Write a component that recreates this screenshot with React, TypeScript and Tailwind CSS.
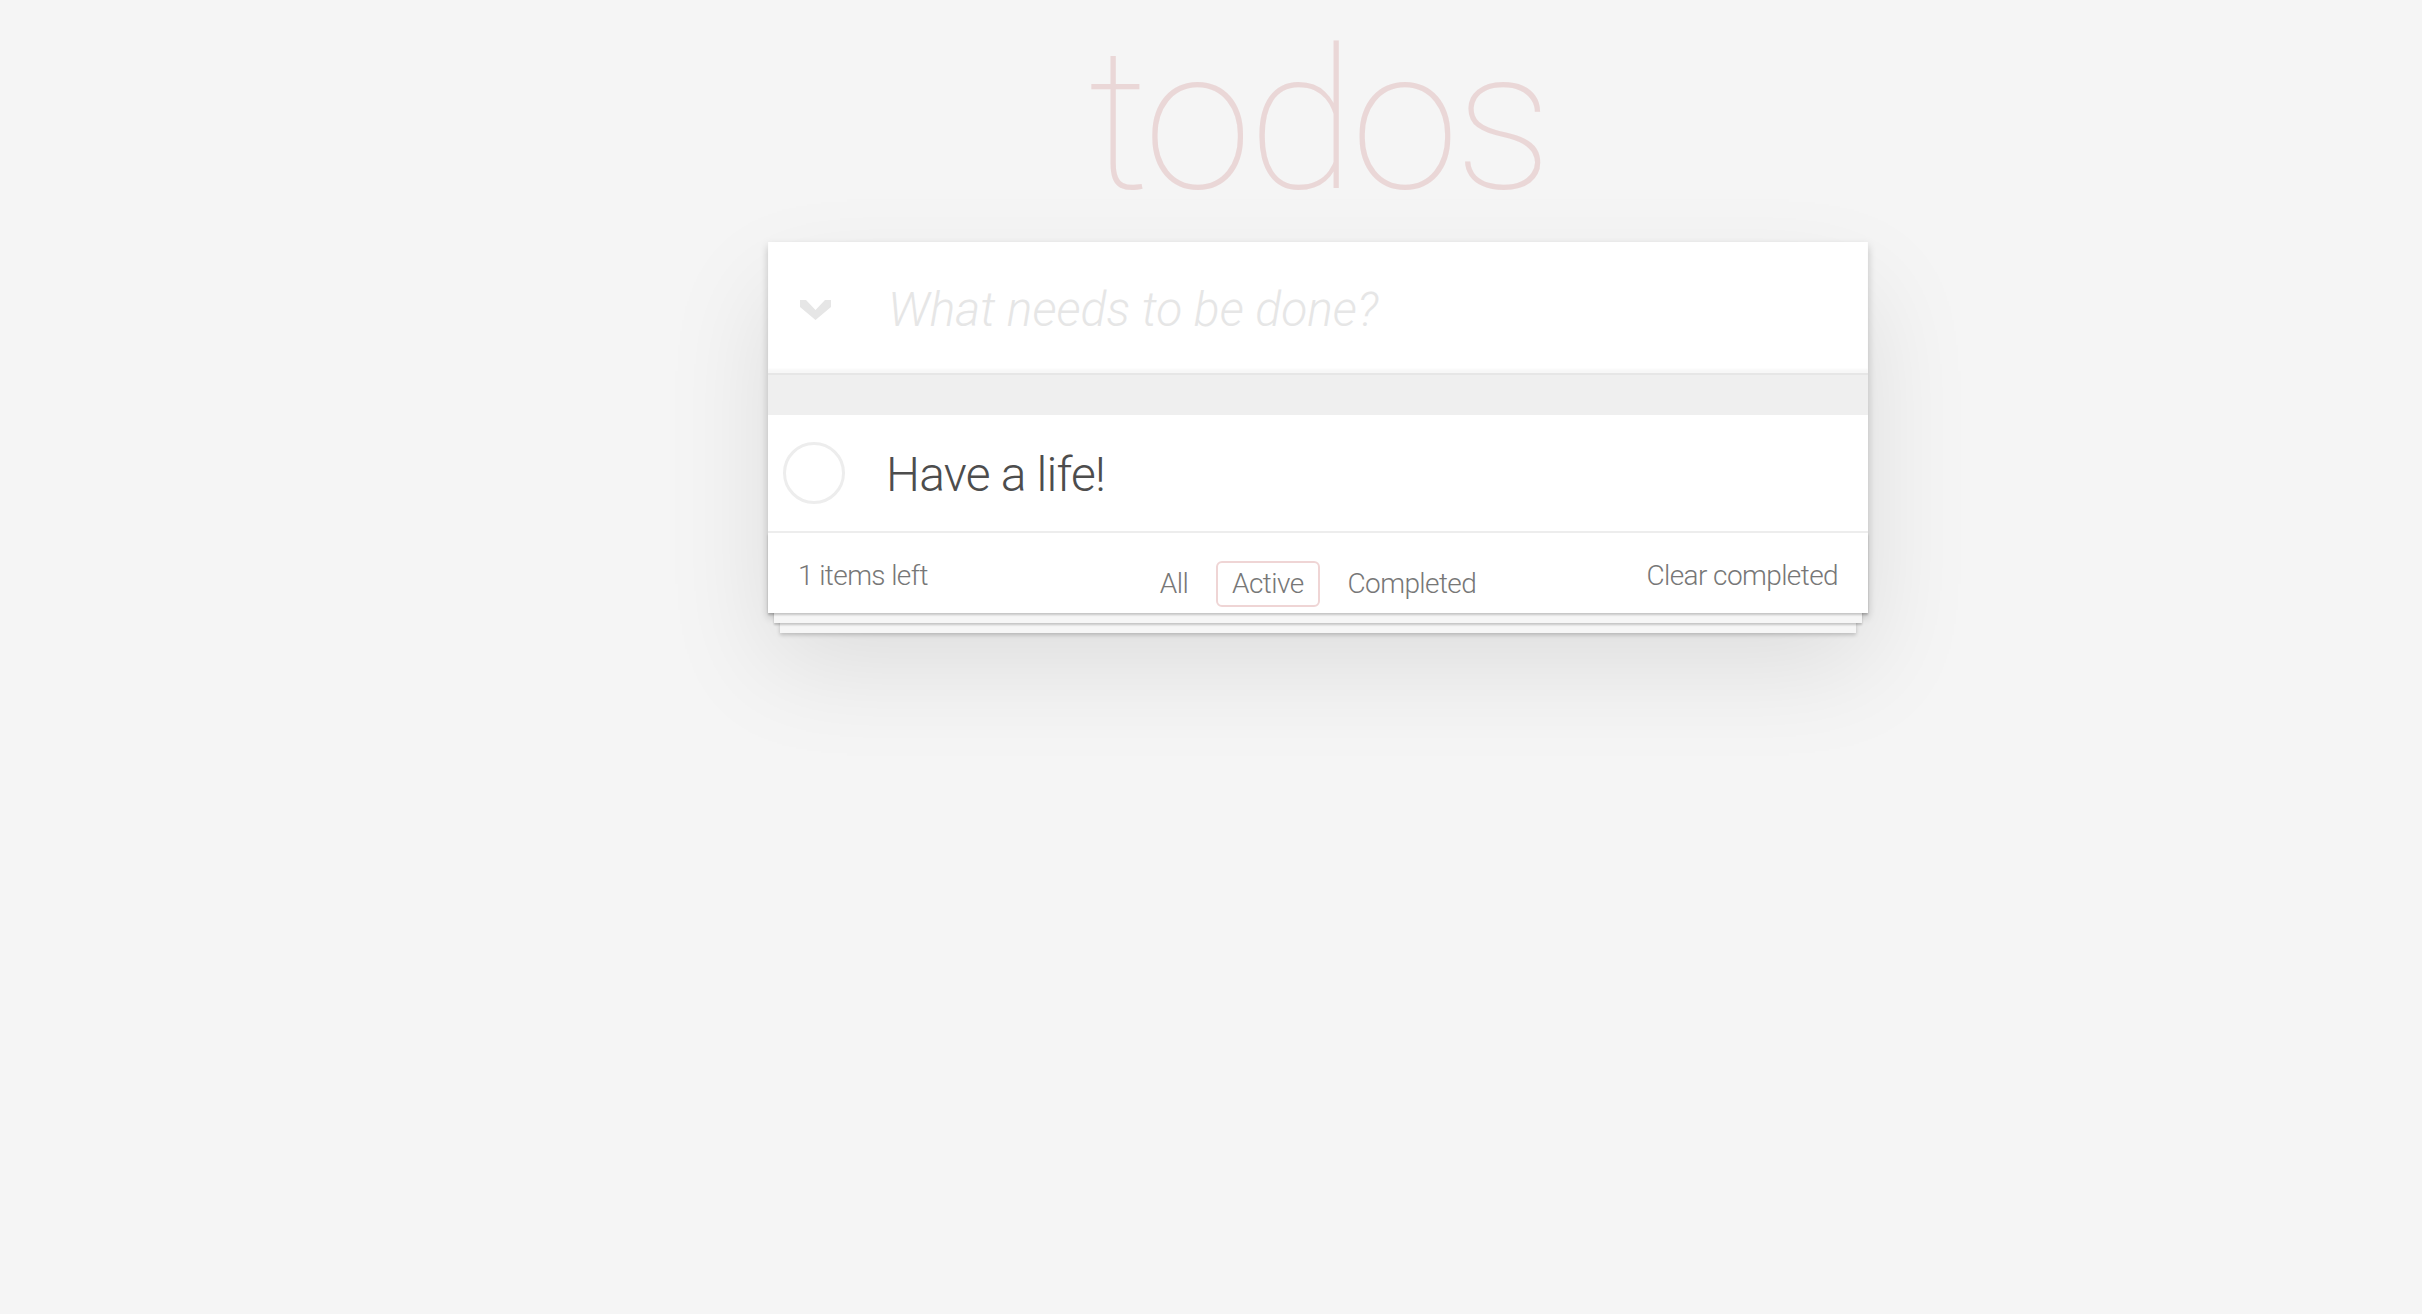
import React from "react";

export default function App() {
  return (
    <div className="min-h-screen w-full bg-[#f5f5f5] font-['Roboto','Helvetica_Neue','Liberation_Sans',sans-serif] font-light text-[#4d4d4d]">
      <div className="ml-[768px] w-[1100px] pt-[21px]">
        <h1 className="h-[200px] mb-[21px] text-center text-[196px] leading-[200px] tracking-[-4px] font-thin text-[#ead7d7]">
          todos
        </h1>
        <section className="bg-white shadow-[0_4px_8px_0_rgba(0,0,0,0.2),0_50px_100px_0_rgba(0,0,0,0.1)]">
          <header className="flex h-[131px] items-center shadow-[inset_0_-4px_2px_rgba(0,0,0,0.03)]">
            <div className="flex w-[120px] shrink-0 pl-[32px] pt-[5px]">
              <svg width="31" height="20" viewBox="0 0 31 20">
                <polygon points="0,0 6,0 15.5,10 25,0 31,0 31,7 15.5,20 0,7" fill="#e6e6e6" />
              </svg>
            </div>
            <input
              className="mt-[3px] h-[67px] flex-1 bg-transparent text-[48px] leading-[67px] font-light text-[#4d4d4d] outline-none placeholder:italic placeholder:font-light placeholder:text-[#e6e6e6]"
              placeholder="What needs to be done?"
            />
          </header>
          <div className="h-[42px] border-t-2 border-[#e6e6e6] bg-[#efefef]" />
          <ul>
            <li className="flex h-[118px] items-center border-b-2 border-[#ededed]">
              <div className="ml-[15px] h-[62px] w-[62px] shrink-0 rounded-full border-[3px] border-[#ededed]" />
              <label className="ml-[41px] mt-[3px] text-[48px] leading-[58px] tracking-[-0.8px] font-light text-[#4d4d4d]">Have a life!</label>
            </li>
          </ul>
          <footer className="grid h-[80px] grid-cols-[1fr_auto_1fr] items-start px-[30px] pt-[23px] text-[28px] leading-[40px] tracking-[-0.6px] text-[#777] shadow-[0_2px_2px_rgba(0,0,0,0.2),0_16px_0_-6px_#f6f6f6,0_18px_2px_-6px_rgba(0,0,0,0.2),0_32px_0_-12px_#f6f6f6,0_34px_4px_-12px_rgba(0,0,0,0.2)]">
            <span className="justify-self-start">1 items left</span>
            <ul className="-mt-[18px] flex pt-[23px]">
              <li className="mx-[6px]">
                <a className="block rounded-[6px] border-2 border-transparent px-[14px] py-[6px] leading-[30px]">All</a>
              </li>
              <li className="mx-[6px]">
                <a className="block rounded-[6px] border-2 border-[#efd5d5] px-[14px] py-[6px] leading-[30px]">Active</a>
              </li>
              <li className="mx-[6px]">
                <a className="block rounded-[6px] border-2 border-transparent px-[14px] py-[6px] leading-[30px]">Completed</a>
              </li>
            </ul>
            <button className="justify-self-end leading-[40px] tracking-[-0.6px] text-[#777]">Clear completed</button>
          </footer>
        </section>
      </div>
    </div>
  );
}
